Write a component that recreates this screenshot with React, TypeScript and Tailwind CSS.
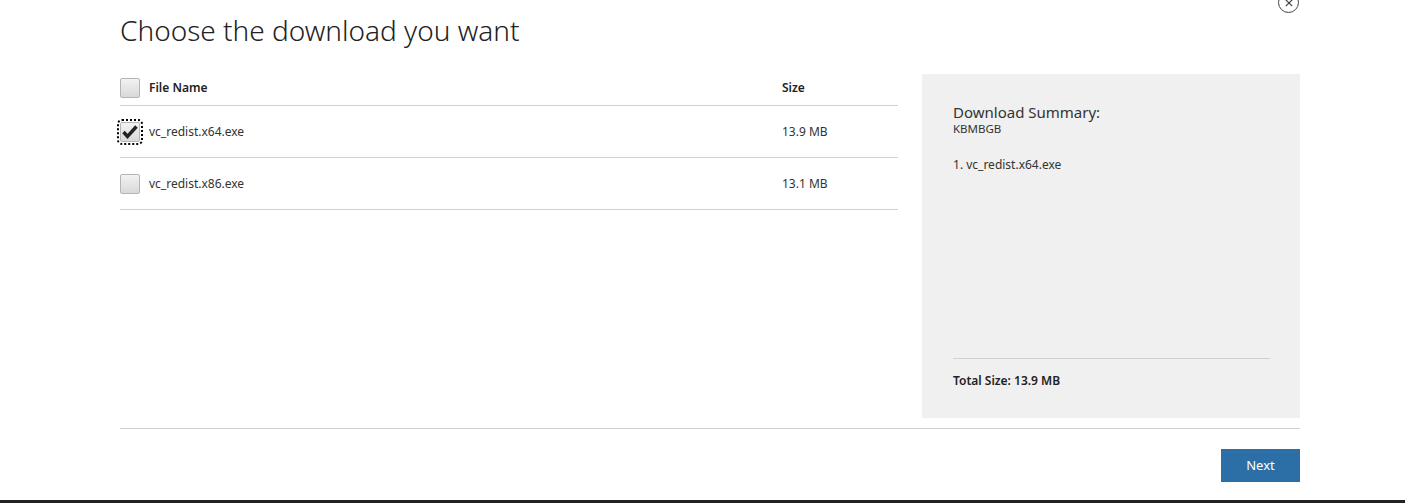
import React, { useState } from 'react';

// --- Download chooser dialog ---

interface IDownloadFile {
  id: string;
  name: string;
  size: string;
}

const files: IDownloadFile[] = [
  { id: 'x64', name: 'vc_redist.x64.exe', size: '13.9 MB' },
  { id: 'x86', name: 'vc_redist.x86.exe', size: '13.1 MB' },
];

const font = { fontFamily: '"Segoe UI", "Noto Sans", sans-serif' };

const CheckBox: React.FC<{ checked: boolean; focused?: boolean; onClick?: () => void }> = ({ checked, focused, onClick }) => (
  <button
    onClick={onClick}
    className={`relative w-[20px] h-[20px] shrink-0 rounded-[2px] border border-[#b5b5b5] bg-gradient-to-b from-[#f2f2f2] to-[#d9d9d9] flex items-center justify-center ${
      focused ? 'outline-2 outline-dotted outline-black outline-offset-[1px]' : ''
    }`}
  >
    {checked && (
      <svg viewBox="0 0 16 16" className="w-[16px] h-[16px]">
        <path d="M1.5 8 L5.5 12.5 L14.5 2.5" fill="none" stroke="#222" strokeWidth="3.4" />
      </svg>
    )}
  </button>
);

export default function App() {
  const [selected, setSelected] = useState<string[]>(['x64']);

  const toggle = (id: string) =>
    setSelected((s) => (s.includes(id) ? s.filter((x) => x !== id) : [...s, id]));

  const chosen = files.filter((f) => selected.includes(f.id));

  return (
    <div className="relative w-[1405px] h-[503px] bg-white overflow-hidden text-[#333]" style={font}>
      {/* close button */}
      <div className="absolute left-[1278px] top-[-8px] w-[21px] h-[21px] rounded-full border-[1.5px] border-[#444] flex items-center justify-center">
        <svg viewBox="0 0 10 10" className="w-[8px] h-[8px]">
          <path d="M1 1 L9 9 M9 1 L1 9" stroke="#444" strokeWidth="1.5" />
        </svg>
      </div>

      <div className="ml-[120px] w-[1180px]">
        <h1 className="text-[28px] font-light leading-[36px] pt-[12px] text-[#222]">Choose the download you want</h1>

        <div className="flex mt-[26px] gap-[24px]">
          {/* file table */}
          <div className="w-[778px]">
            <div className="flex items-center h-[32px] border-b border-[#d0d0d0] pb-[3px]">
              <CheckBox checked={false} />
              <span className="ml-[9px] text-[12px] font-semibold text-[#222]">File Name</span>
              <span className="ml-auto w-[116px] text-[12px] font-semibold text-[#222]">Size</span>
            </div>
            {files.map((f, i) => (
              <div key={f.id} className="flex items-center h-[52px] border-b border-[#d0d0d0]">
                <CheckBox checked={selected.includes(f.id)} focused={i === 0} onClick={() => toggle(f.id)} />
                <span className="ml-[9px] text-[12px]">{f.name}</span>
                <span className="ml-auto w-[116px] text-[12px]">{f.size}</span>
              </div>
            ))}
          </div>

          {/* summary panel */}
          <div className="w-[378px] h-[344px] bg-[#f0f0f0] px-[31px] pt-[29px] pb-[28px] flex flex-col">
            <div className="text-[15px] leading-[18px] text-[#333]">Download Summary:</div>
            <div className="text-[11.5px] leading-[15px]">KBMBGB</div>
            <ol className="mt-[20px] text-[12px]">
              {chosen.map((f, i) => (
                <li key={f.id}>
                  {i + 1}. {f.name}
                </li>
              ))}
            </ol>
            <div className="mt-auto w-[317px] border-t border-[#d0d0d0] pt-[13px] text-[12px] font-semibold text-[#222]">
              Total Size: 13.9 MB
            </div>
          </div>
        </div>

        <div className="mt-[10px] border-t border-[#d0d0d0] flex justify-end pt-[20px]">
          <button className="w-[79px] h-[33px] bg-[#2c6fa7] text-white text-[13px]">Next</button>
        </div>
      </div>

      <div className="absolute left-0 bottom-0 w-full h-[3px] bg-[#222]" />
    </div>
  );
}
